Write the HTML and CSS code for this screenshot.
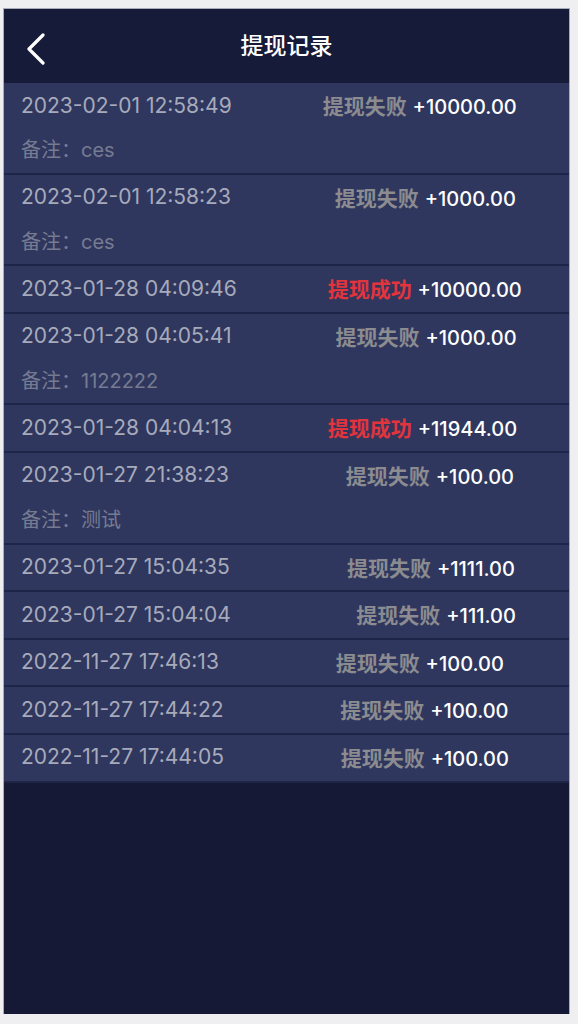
FILE: index.html
```html
<!DOCTYPE html>
<html lang="zh-CN">
<head>
    <meta charset="UTF-8">
    <title>提现记录</title>
    <link rel="stylesheet" href="styles.css">
</head>
<body>

<div class="app">
    <!-- Cabeçalho -->
    <div class="header">
        <a class="back" href="#">
            <svg width="20" height="32" viewBox="0 0 20 32">
                <path d="M17 2 L3 16 L17 30" fill="none" stroke="#fff" stroke-width="3.2" stroke-linecap="round" stroke-linejoin="round"/>
            </svg>
        </a>
        <h1>提现记录</h1>
        <span></span>
    </div>

    <!-- Lista -->
    <div class="list">
        <div class="item">
            <div class="line">
                <span class="time">2023-02-01 12:58:49</span>
                <span class="result"><b class="fail">提现失败</b> <b class="money">+10000.00</b></span>
            </div>
            <div class="note">备注：ces</div>
        </div>
        <div class="item">
            <div class="line">
                <span class="time">2023-02-01 12:58:23</span>
                <span class="result"><b class="fail">提现失败</b> <b class="money">+1000.00</b></span>
            </div>
            <div class="note">备注：ces</div>
        </div>
        <div class="item">
            <div class="line">
                <span class="time">2023-01-28 04:09:46</span>
                <span class="result"><b class="ok">提现成功</b> <b class="money">+10000.00</b></span>
            </div>
        </div>
        <div class="item">
            <div class="line">
                <span class="time">2023-01-28 04:05:41</span>
                <span class="result"><b class="fail">提现失败</b> <b class="money">+1000.00</b></span>
            </div>
            <div class="note">备注：1122222</div>
        </div>
        <div class="item">
            <div class="line">
                <span class="time">2023-01-28 04:04:13</span>
                <span class="result"><b class="ok">提现成功</b> <b class="money">+11944.00</b></span>
            </div>
        </div>
        <div class="item">
            <div class="line">
                <span class="time">2023-01-27 21:38:23</span>
                <span class="result"><b class="fail">提现失败</b> <b class="money">+100.00</b></span>
            </div>
            <div class="note">备注：测试</div>
        </div>
        <div class="item">
            <div class="line">
                <span class="time">2023-01-27 15:04:35</span>
                <span class="result"><b class="fail">提现失败</b> <b class="money">+1111.00</b></span>
            </div>
        </div>
        <div class="item">
            <div class="line">
                <span class="time">2023-01-27 15:04:04</span>
                <span class="result"><b class="fail">提现失败</b> <b class="money">+111.00</b></span>
            </div>
        </div>
        <div class="item">
            <div class="line">
                <span class="time">2022-11-27 17:46:13</span>
                <span class="result"><b class="fail">提现失败</b> <b class="money">+100.00</b></span>
            </div>
        </div>
        <div class="item">
            <div class="line">
                <span class="time">2022-11-27 17:44:22</span>
                <span class="result"><b class="fail">提现失败</b> <b class="money">+100.00</b></span>
            </div>
        </div>
        <div class="item">
            <div class="line">
                <span class="time">2022-11-27 17:44:05</span>
                <span class="result"><b class="fail">提现失败</b> <b class="money">+100.00</b></span>
            </div>
        </div>
    </div>
</div>

</body>
</html>
```

FILE: styles.css
```css
body {
    margin: 0;
    background: #efeff1;
    font-family: Inter, 'Noto Sans CJK SC', sans-serif;
}

.app {
    width: 565px;
    height: 1005px;
    margin: 9px 0 0 4px;
    background: #151936;
    box-shadow: 0 0 0 1px #a9abb8;
    overflow: hidden;
}

.header {
    height: 74px;
    background: #171b3a;
    display: grid;
    grid-template-columns: 60px 1fr 60px;
    align-items: center;
}

.back {
    display: flex;
    padding: 6px 0 0 22px;
}

.header h1 {
    margin: 0;
    padding-bottom: 4px;
    text-align: center;
    color: #fff;
    font-size: 23px;
    font-weight: 500;
}

.list {
    background: #2f375e;
}

.item {
    padding: 0 0 1.6px 17px;
    border-bottom: 2px solid #1f2548;
}

.line {
    display: flex;
    height: 44px;
    align-items: center;
}

.time {
    font-size: 21px;
    color: #a7aabb;
}

.result {
    width: 285px;
    text-align: right;
    font-size: 21px;
}

.result b {
    font-weight: 600;
}

.fail {
    color: #8b8b90;
}

.ok {
    color: #e2343d;
}

.money {
    color: #fff;
    font-size: 20px;
    font-weight: 500 !important;
}

.note {
    height: 44px;
    line-height: 46px;
    font-size: 20px;
    color: #767b92;
}
```
